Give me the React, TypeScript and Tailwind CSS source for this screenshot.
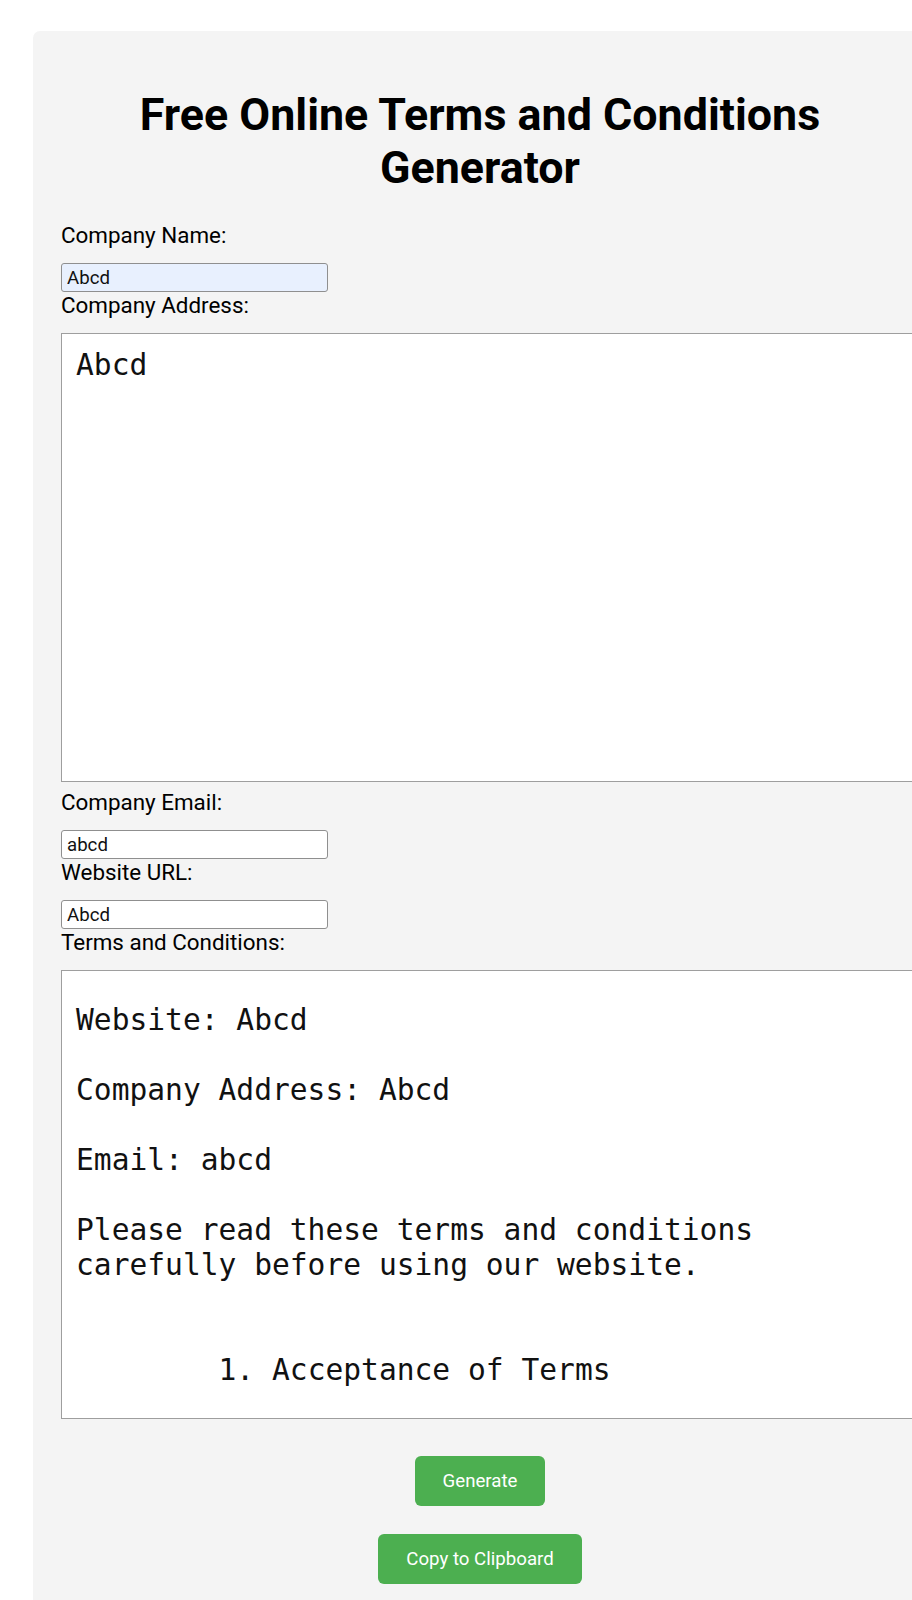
import { useState } from "react";

const sans = "font-['Roboto',_'Liberation_Sans',_sans-serif]";

function buildTerms(name: string, address: string, email: string, url: string) {
  return [
    `Website: ${url}`,
    "",
    `Company Address: ${address}`,
    "",
    `Email: ${email}`,
    "",
    "Please read these terms and conditions",
    "carefully before using our website.",
    "",
    "",
    "        1. Acceptance of Terms",
    "",
    `        By accessing ${name}, you agree to be bound by these terms.`,
    "",
    "        2. Use of the Website",
  ].join("\n");
}

/* Label + field pair, laid out like a plain stacked form */
function FieldLabel({ children }: { children: React.ReactNode }) {
  return (
    <label className={`${sans} block text-[22.4px] leading-[27px] text-black mb-[14px]`}>
      {children}
    </label>
  );
}

export default function App() {
  const [name, setName]       = useState("Abcd");
  const [address, setAddress] = useState("Abcd");
  const [email, setEmail]     = useState("abcd");
  const [url, setUrl]         = useState("Abcd");
  const [terms, setTerms]     = useState(() => buildTerms("Abcd", "Abcd", "abcd", "Abcd"));

  const inputCls =
    `${sans} block w-[267px] h-[29px] rounded-[3px] border border-[#8f8f8f] px-[5px] text-[18.67px] text-[#111] outline-none`;
  const areaCls =
    "block w-[868px] h-[448.5px] resize-none border border-[#9e9e9e] bg-white px-[14px] font-['DejaVu_Sans_Mono',_monospace] text-[29.6px] leading-[35px] text-[#111] outline-none";

  return (
    <div className="min-h-screen w-full overflow-hidden bg-white">
      <div className="ml-[33px] mt-[31px] w-[894px] rounded-[7px] bg-[#f4f4f4] px-[28px] pt-[28px] pb-[28px]">
        <h1 className={`${sans} mt-[30px] mb-[28px] text-center text-[44.8px] font-bold leading-[52.5px] text-black`}>
          Free Online Terms and Conditions Generator
        </h1>

        <FieldLabel>Company Name:</FieldLabel>
        <input
          className={`${inputCls} bg-[#e8f0fe]`}
          value={name}
          onChange={(e) => setName(e.target.value)}
        />

        <FieldLabel>Company Address:</FieldLabel>
        <textarea
          className={`${areaCls} pt-[14px] mb-[7.5px]`}
          value={address}
          onChange={(e) => setAddress(e.target.value)}
        />

        <FieldLabel>Company Email:</FieldLabel>
        <input
          className={`${inputCls} bg-white`}
          value={email}
          onChange={(e) => setEmail(e.target.value)}
        />

        <FieldLabel>Website URL:</FieldLabel>
        <input
          className={`${inputCls} bg-white`}
          value={url}
          onChange={(e) => setUrl(e.target.value)}
        />

        <FieldLabel>Terms and Conditions:</FieldLabel>
        <textarea
          className={`${areaCls} pt-[32px] overflow-hidden`}
          value={terms}
          onChange={(e) => setTerms(e.target.value)}
        />

        <div className="mt-[37.5px] flex flex-col items-center gap-[28px]">
          <button
            className={`${sans} h-[50px] rounded-[6px] bg-[#4caf50] px-[28px] text-[18.67px] text-white`}
            onClick={() => setTerms(buildTerms(name, address, email, url))}
          >
            Generate
          </button>
          <button
            className={`${sans} h-[50px] rounded-[6px] bg-[#4caf50] px-[28px] text-[18.67px] text-white`}
            onClick={() => navigator.clipboard?.writeText(terms)}
          >
            Copy to Clipboard
          </button>
        </div>
      </div>
    </div>
  );
}
